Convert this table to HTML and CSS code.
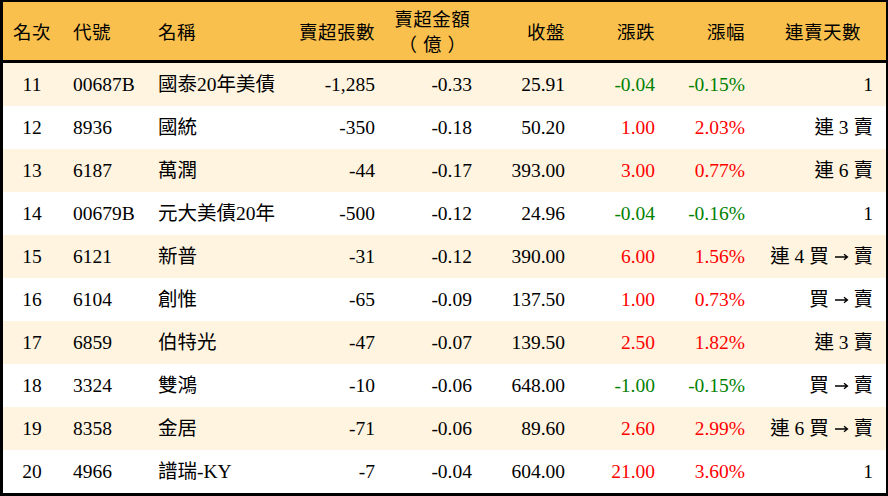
FILE: index.html
```html
<!DOCTYPE html>
<html lang="zh-Hant">
<head>
<meta charset="utf-8">
<link rel="stylesheet" href="styles.css">
</head>
<body>
<div class="board">
  <div class="row head">
    <div class="c c1">名次</div>
    <div class="c c2">代號</div>
    <div class="c c3">名稱</div>
    <div class="c r">賣超張數</div>
    <div class="c r"><span class="two">賣超金額<br><span class="paren">（億）</span></span></div>
    <div class="c r">收盤</div>
    <div class="c r">漲跌</div>
    <div class="c r">漲幅</div>
    <div class="c r c9h">連賣天數</div>
  </div>
  <div class="row odd">
    <div class="c c1">11</div><div class="c c2">00687B</div><div class="c c3">國泰20年美債</div>
    <div class="c r">-1,285</div><div class="c r">-0.33</div><div class="c r">25.91</div>
    <div class="c r dn">-0.04</div><div class="c r dn">-0.15%</div><div class="c r">1</div>
  </div>
  <div class="row">
    <div class="c c1">12</div><div class="c c2">8936</div><div class="c c3">國統</div>
    <div class="c r">-350</div><div class="c r">-0.18</div><div class="c r">50.20</div>
    <div class="c r up">1.00</div><div class="c r up">2.03%</div><div class="c r">連 3 賣</div>
  </div>
  <div class="row odd">
    <div class="c c1">13</div><div class="c c2">6187</div><div class="c c3">萬潤</div>
    <div class="c r">-44</div><div class="c r">-0.17</div><div class="c r">393.00</div>
    <div class="c r up">3.00</div><div class="c r up">0.77%</div><div class="c r">連 6 賣</div>
  </div>
  <div class="row">
    <div class="c c1">14</div><div class="c c2">00679B</div><div class="c c3">元大美債20年</div>
    <div class="c r">-500</div><div class="c r">-0.12</div><div class="c r">24.96</div>
    <div class="c r dn">-0.04</div><div class="c r dn">-0.16%</div><div class="c r">1</div>
  </div>
  <div class="row odd">
    <div class="c c1">15</div><div class="c c2">6121</div><div class="c c3">新普</div>
    <div class="c r">-31</div><div class="c r">-0.12</div><div class="c r">390.00</div>
    <div class="c r up">6.00</div><div class="c r up">1.56%</div><div class="c r">連 4 買 <svg class="arr" viewBox="0 0 14 10"><path d="M0.5 5H13M9.5 2.2L13 5L9.5 7.8"/></svg> 賣</div>
  </div>
  <div class="row">
    <div class="c c1">16</div><div class="c c2">6104</div><div class="c c3">創惟</div>
    <div class="c r">-65</div><div class="c r">-0.09</div><div class="c r">137.50</div>
    <div class="c r up">1.00</div><div class="c r up">0.73%</div><div class="c r">買 <svg class="arr" viewBox="0 0 14 10"><path d="M0.5 5H13M9.5 2.2L13 5L9.5 7.8"/></svg> 賣</div>
  </div>
  <div class="row odd">
    <div class="c c1">17</div><div class="c c2">6859</div><div class="c c3">伯特光</div>
    <div class="c r">-47</div><div class="c r">-0.07</div><div class="c r">139.50</div>
    <div class="c r up">2.50</div><div class="c r up">1.82%</div><div class="c r">連 3 賣</div>
  </div>
  <div class="row">
    <div class="c c1">18</div><div class="c c2">3324</div><div class="c c3">雙鴻</div>
    <div class="c r">-10</div><div class="c r">-0.06</div><div class="c r">648.00</div>
    <div class="c r dn">-1.00</div><div class="c r dn">-0.15%</div><div class="c r">買 <svg class="arr" viewBox="0 0 14 10"><path d="M0.5 5H13M9.5 2.2L13 5L9.5 7.8"/></svg> 賣</div>
  </div>
  <div class="row odd">
    <div class="c c1">19</div><div class="c c2">8358</div><div class="c c3">金居</div>
    <div class="c r">-71</div><div class="c r">-0.06</div><div class="c r">89.60</div>
    <div class="c r up">2.60</div><div class="c r up">2.99%</div><div class="c r">連 6 買 <svg class="arr" viewBox="0 0 14 10"><path d="M0.5 5H13M9.5 2.2L13 5L9.5 7.8"/></svg> 賣</div>
  </div>
  <div class="row">
    <div class="c c1">20</div><div class="c c2">4966</div><div class="c c3">譜瑞-KY</div>
    <div class="c r">-7</div><div class="c r">-0.04</div><div class="c r">604.00</div>
    <div class="c r up">21.00</div><div class="c r up">3.60%</div><div class="c r">1</div>
  </div>
</div>
</body>
</html>
```
FILE: styles.css
```css
html, body {
  margin: 0;
  padding: 0;
  background: #ffffff;
}
.board {
  width: 888px;
  height: 496px;
  box-sizing: border-box;
  border-style: solid;
  border-color: #000;
  border-width: 2px 2px 3px 3px;
  font-family: "Liberation Serif", "Noto Sans CJK TC", serif;
  font-size: 19.5px;
  color: #000;
  background: #fff;
}
.row {
  display: grid;
  grid-template-columns: 58px 86px 138px 90px 97px 93px 90px 90px 128px;
  height: 43px;
  align-items: center;
  white-space: nowrap;
}
.row.odd {
  background: #fef4e0;
}
.row.head {
  height: 54px;
  padding-top: 4px;
  background: #f9c04e;
  border-bottom: 3px solid #000;
  font-size: 18.5px;
}
.head .c {
  letter-spacing: 0.5px;
}
.c {
  line-height: 23px;
}
.c1 {
  text-align: center;
}
.c2 {
  padding-left: 12px;
}
.c3 {
  padding-left: 11px;
}
.r {
  text-align: right;
}
.two {
  display: inline-block;
  text-align: center;
}
.paren {
  font-family: "Noto Sans CJK TC", sans-serif;
  letter-spacing: 6px;
  padding-left: 6px;
}
.c9h {
  padding-right: 12px;
}
.arr {
  width: 15px;
  height: 10px;
  vertical-align: 1px;
  fill: none;
  stroke: #000;
  stroke-width: 1.3;
}
.up {
  color: #ff0000;
}
.dn {
  color: #008000;
}
```
